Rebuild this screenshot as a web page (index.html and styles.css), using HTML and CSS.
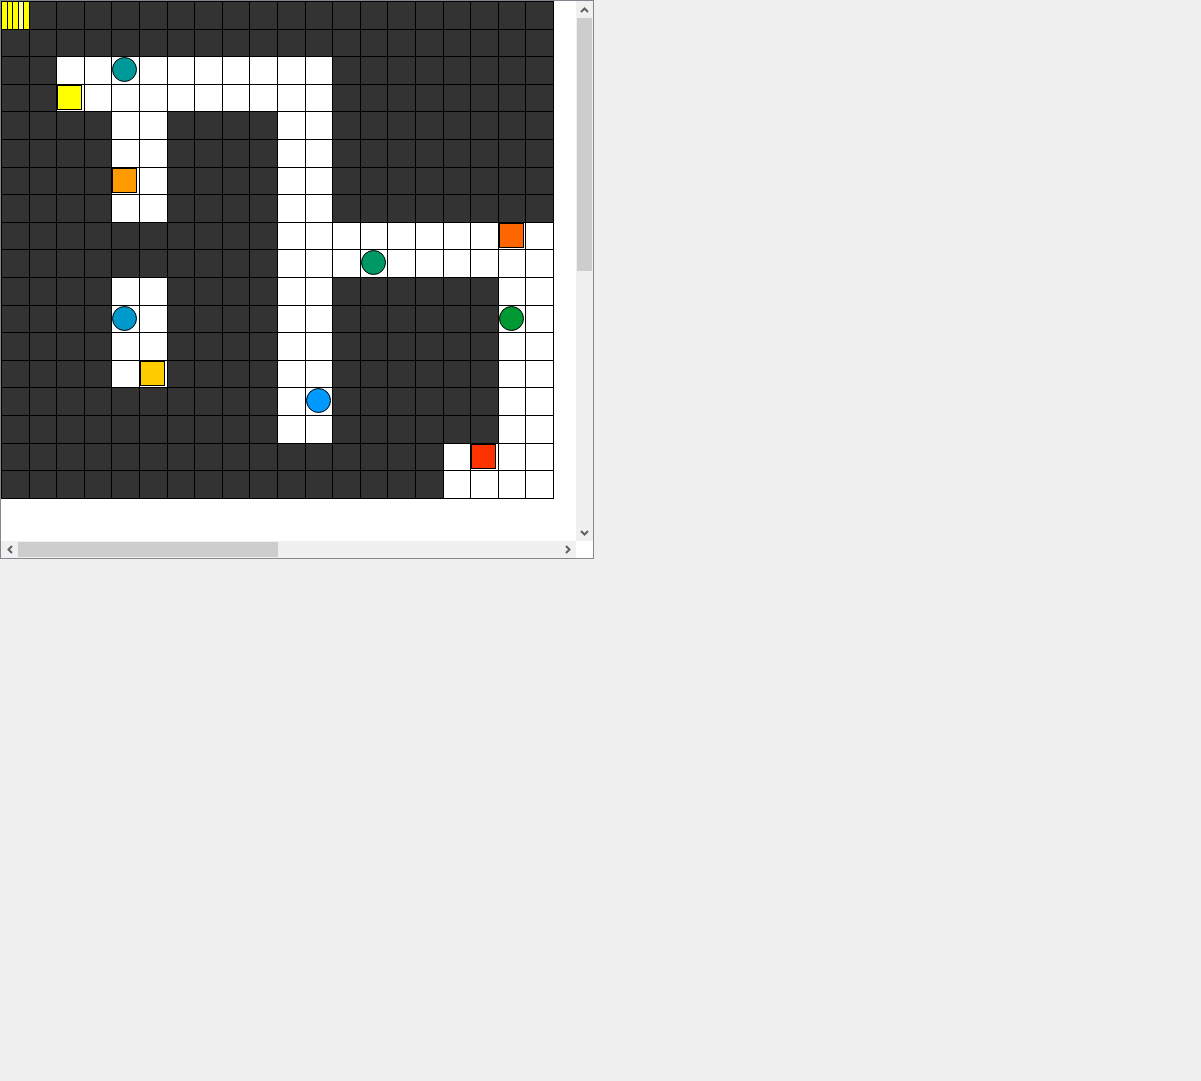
FILE: index.html
```html
<!DOCTYPE html>
<html>
<head>
<meta charset="utf-8">
<link rel="stylesheet" href="styles.css">
</head>
<body>
<div class="frame">
  <div class="view">
    <div class="board">
      <div class="c d stripes"><i></i><i></i><i></i><i class="pale"></i><i></i></div><div class="c d"></div><div class="c d"></div><div class="c d"></div><div class="c d"></div><div class="c d"></div><div class="c d"></div><div class="c d"></div><div class="c d"></div><div class="c d"></div><div class="c d"></div><div class="c d"></div><div class="c d"></div><div class="c d"></div><div class="c d"></div><div class="c d"></div><div class="c d"></div><div class="c d"></div><div class="c d"></div><div class="c d"></div>
      <div class="c d"></div><div class="c d"></div><div class="c d"></div><div class="c d"></div><div class="c d"></div><div class="c d"></div><div class="c d"></div><div class="c d"></div><div class="c d"></div><div class="c d"></div><div class="c d"></div><div class="c d"></div><div class="c d"></div><div class="c d"></div><div class="c d"></div><div class="c d"></div><div class="c d"></div><div class="c d"></div><div class="c d"></div><div class="c d"></div>
      <div class="c d"></div><div class="c d"></div><div class="c w"></div><div class="c w"></div><div class="c w"><span class="ci teal"></span></div><div class="c w"></div><div class="c w"></div><div class="c w"></div><div class="c w"></div><div class="c w"></div><div class="c w"></div><div class="c w"></div><div class="c d"></div><div class="c d"></div><div class="c d"></div><div class="c d"></div><div class="c d"></div><div class="c d"></div><div class="c d"></div><div class="c d"></div>
      <div class="c d"></div><div class="c d"></div><div class="c w"><span class="sq yellow"></span></div><div class="c w"></div><div class="c w"></div><div class="c w"></div><div class="c w"></div><div class="c w"></div><div class="c w"></div><div class="c w"></div><div class="c w"></div><div class="c w"></div><div class="c d"></div><div class="c d"></div><div class="c d"></div><div class="c d"></div><div class="c d"></div><div class="c d"></div><div class="c d"></div><div class="c d"></div>
      <div class="c d"></div><div class="c d"></div><div class="c d"></div><div class="c d"></div><div class="c w"></div><div class="c w"></div><div class="c d"></div><div class="c d"></div><div class="c d"></div><div class="c d"></div><div class="c w"></div><div class="c w"></div><div class="c d"></div><div class="c d"></div><div class="c d"></div><div class="c d"></div><div class="c d"></div><div class="c d"></div><div class="c d"></div><div class="c d"></div>
      <div class="c d"></div><div class="c d"></div><div class="c d"></div><div class="c d"></div><div class="c w"></div><div class="c w"></div><div class="c d"></div><div class="c d"></div><div class="c d"></div><div class="c d"></div><div class="c w"></div><div class="c w"></div><div class="c d"></div><div class="c d"></div><div class="c d"></div><div class="c d"></div><div class="c d"></div><div class="c d"></div><div class="c d"></div><div class="c d"></div>
      <div class="c d"></div><div class="c d"></div><div class="c d"></div><div class="c d"></div><div class="c w"><span class="sq orange"></span></div><div class="c w"></div><div class="c d"></div><div class="c d"></div><div class="c d"></div><div class="c d"></div><div class="c w"></div><div class="c w"></div><div class="c d"></div><div class="c d"></div><div class="c d"></div><div class="c d"></div><div class="c d"></div><div class="c d"></div><div class="c d"></div><div class="c d"></div>
      <div class="c d"></div><div class="c d"></div><div class="c d"></div><div class="c d"></div><div class="c w"></div><div class="c w"></div><div class="c d"></div><div class="c d"></div><div class="c d"></div><div class="c d"></div><div class="c w"></div><div class="c w"></div><div class="c d"></div><div class="c d"></div><div class="c d"></div><div class="c d"></div><div class="c d"></div><div class="c d"></div><div class="c d"></div><div class="c d"></div>
      <div class="c d"></div><div class="c d"></div><div class="c d"></div><div class="c d"></div><div class="c d"></div><div class="c d"></div><div class="c d"></div><div class="c d"></div><div class="c d"></div><div class="c d"></div><div class="c w"></div><div class="c w"></div><div class="c w"></div><div class="c w"></div><div class="c w"></div><div class="c w"></div><div class="c w"></div><div class="c w"></div><div class="c w"><span class="sq tangerine"></span></div><div class="c w"></div>
      <div class="c d"></div><div class="c d"></div><div class="c d"></div><div class="c d"></div><div class="c d"></div><div class="c d"></div><div class="c d"></div><div class="c d"></div><div class="c d"></div><div class="c d"></div><div class="c w"></div><div class="c w"></div><div class="c w"></div><div class="c w"><span class="ci jade"></span></div><div class="c w"></div><div class="c w"></div><div class="c w"></div><div class="c w"></div><div class="c w"></div><div class="c w"></div>
      <div class="c d"></div><div class="c d"></div><div class="c d"></div><div class="c d"></div><div class="c w"></div><div class="c w"></div><div class="c d"></div><div class="c d"></div><div class="c d"></div><div class="c d"></div><div class="c w"></div><div class="c w"></div><div class="c d"></div><div class="c d"></div><div class="c d"></div><div class="c d"></div><div class="c d"></div><div class="c d"></div><div class="c w"></div><div class="c w"></div>
      <div class="c d"></div><div class="c d"></div><div class="c d"></div><div class="c d"></div><div class="c w"><span class="ci cerulean"></span></div><div class="c w"></div><div class="c d"></div><div class="c d"></div><div class="c d"></div><div class="c d"></div><div class="c w"></div><div class="c w"></div><div class="c d"></div><div class="c d"></div><div class="c d"></div><div class="c d"></div><div class="c d"></div><div class="c d"></div><div class="c w"><span class="ci green"></span></div><div class="c w"></div>
      <div class="c d"></div><div class="c d"></div><div class="c d"></div><div class="c d"></div><div class="c w"></div><div class="c w"></div><div class="c d"></div><div class="c d"></div><div class="c d"></div><div class="c d"></div><div class="c w"></div><div class="c w"></div><div class="c d"></div><div class="c d"></div><div class="c d"></div><div class="c d"></div><div class="c d"></div><div class="c d"></div><div class="c w"></div><div class="c w"></div>
      <div class="c d"></div><div class="c d"></div><div class="c d"></div><div class="c d"></div><div class="c w"></div><div class="c w"><span class="sq amber"></span></div><div class="c d"></div><div class="c d"></div><div class="c d"></div><div class="c d"></div><div class="c w"></div><div class="c w"></div><div class="c d"></div><div class="c d"></div><div class="c d"></div><div class="c d"></div><div class="c d"></div><div class="c d"></div><div class="c w"></div><div class="c w"></div>
      <div class="c d"></div><div class="c d"></div><div class="c d"></div><div class="c d"></div><div class="c d"></div><div class="c d"></div><div class="c d"></div><div class="c d"></div><div class="c d"></div><div class="c d"></div><div class="c w"></div><div class="c w"><span class="ci azure"></span></div><div class="c d"></div><div class="c d"></div><div class="c d"></div><div class="c d"></div><div class="c d"></div><div class="c d"></div><div class="c w"></div><div class="c w"></div>
      <div class="c d"></div><div class="c d"></div><div class="c d"></div><div class="c d"></div><div class="c d"></div><div class="c d"></div><div class="c d"></div><div class="c d"></div><div class="c d"></div><div class="c d"></div><div class="c w"></div><div class="c w"></div><div class="c d"></div><div class="c d"></div><div class="c d"></div><div class="c d"></div><div class="c d"></div><div class="c d"></div><div class="c w"></div><div class="c w"></div>
      <div class="c d"></div><div class="c d"></div><div class="c d"></div><div class="c d"></div><div class="c d"></div><div class="c d"></div><div class="c d"></div><div class="c d"></div><div class="c d"></div><div class="c d"></div><div class="c d"></div><div class="c d"></div><div class="c d"></div><div class="c d"></div><div class="c d"></div><div class="c d"></div><div class="c w"></div><div class="c w"><span class="sq red"></span></div><div class="c w"></div><div class="c w"></div>
      <div class="c d"></div><div class="c d"></div><div class="c d"></div><div class="c d"></div><div class="c d"></div><div class="c d"></div><div class="c d"></div><div class="c d"></div><div class="c d"></div><div class="c d"></div><div class="c d"></div><div class="c d"></div><div class="c d"></div><div class="c d"></div><div class="c d"></div><div class="c d"></div><div class="c w"></div><div class="c w"></div><div class="c w"></div><div class="c w"></div>
    </div>
  </div>
  <div class="vbar">
    <span class="btn"><svg width="9" height="6" viewBox="0 0 9 6"><polyline points="1,5 4.5,1.5 8,5" fill="none" stroke="#606060" stroke-width="2"/></svg></span>
    <span class="track"><span class="thumb"></span></span>
    <span class="btn"><svg width="9" height="6" viewBox="0 0 9 6"><polyline points="1,1 4.5,4.5 8,1" fill="none" stroke="#606060" stroke-width="2"/></svg></span>
  </div>
  <div class="hbar">
    <span class="btn"><svg width="6" height="9" viewBox="0 0 6 9"><polyline points="5,1 1.5,4.5 5,8" fill="none" stroke="#606060" stroke-width="2"/></svg></span>
    <span class="track"><span class="thumb"></span></span>
    <span class="btn"><svg width="6" height="9" viewBox="0 0 6 9"><polyline points="1,1 4.5,4.5 1,8" fill="none" stroke="#606060" stroke-width="2"/></svg></span>
  </div>
  <div class="corner"></div>
</div>
</body>
</html>
```

FILE: styles.css
```css
html, body {
  margin: 0;
  padding: 0;
  background: #f0f0f0;
}

.frame {
  width: 592px;
  height: 557px;
  border: 1px solid #828790;
  background: #ffffff;
  display: grid;
  grid-template-columns: 575px 17px;
  grid-template-rows: 540px 17px;
}

.view {
  overflow: hidden;
  background: #ffffff;
}

.board {
  display: grid;
  grid-template-columns: repeat(20, 26.6px);
  grid-template-rows: repeat(18, 26.6px);
  gap: 1px;
  padding: 1px;
  width: max-content;
  background: #000000;
}

.c {
  position: relative;
}

.d {
  background: #333333;
}

.w {
  background: #ffffff;
}

.stripes {
  display: flex;
  gap: 1px;
  background: #000000;
}

.stripes i {
  flex: 1;
  background: #ffff00;
}

.stripes i.pale {
  background: #ffff99;
}

.sq,
.ci {
  position: absolute;
  left: 0;
  top: 0;
  width: 23px;
  height: 23px;
  border: 1px solid #000000;
}

.ci {
  border-radius: 50%;
}

.teal { background: #009999; }
.yellow { background: #ffff00; }
.orange { background: #ff9900; }
.tangerine { background: #ff6600; }
.jade { background: #009966; }
.cerulean { background: #0099cc; }
.green { background: #009933; }
.amber { background: #ffcc00; }
.azure { background: #0099ff; }
.red { background: #ff3300; }

/* scrollbars */
.vbar,
.hbar {
  display: flex;
  background: #f0f0f0;
}

.vbar {
  flex-direction: column;
}

.btn {
  flex: 0 0 17px;
  display: flex;
  align-items: center;
  justify-content: center;
}

.track {
  flex: 1;
  display: flex;
}

.vbar .track {
  flex-direction: column;
  padding: 0 1px;
}

.hbar .track {
  padding: 1px 0;
}

.vbar .thumb {
  height: 253px;
  background: #cdcdcd;
}

.hbar .thumb {
  width: 260px;
  background: #cdcdcd;
}

.corner {
  background: #ffffff;
}
```
